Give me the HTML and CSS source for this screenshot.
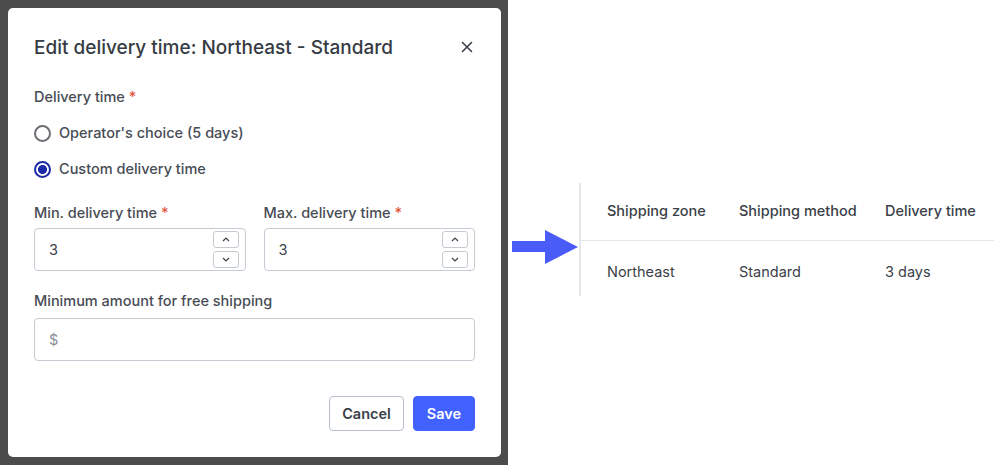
FILE: index.html
```html
<!DOCTYPE html>
<html>
<head>
<meta charset="utf-8">
<link rel="stylesheet" href="styles.css">
</head>
<body>
<div class="page">
  <div class="overlay">
    <div class="modal">
      <div class="modal-head">
        <h2 class="modal-title">Edit delivery time: Northeast - Standard</h2>
        <span class="close">
          <svg width="12" height="12" viewBox="0 0 12 12"><path d="M1.5 1.5 L10.5 10.5 M10.5 1.5 L1.5 10.5" stroke="#3b4049" stroke-width="1.6" stroke-linecap="round"/></svg>
        </span>
      </div>
      <div class="label">Delivery time <span class="req">*</span></div>
      <div class="radios">
        <label class="radio"><span class="dot"></span>Operator's choice (5 days)</label>
        <label class="radio checked"><span class="dot"></span>Custom delivery time</label>
      </div>
      <div class="two">
        <div class="field">
          <div class="label">Min. delivery time <span class="req">*</span></div>
          <div class="input">
            <span class="val">3</span>
            <span class="spin">
              <span class="sbtn"><svg width="8" height="5" viewBox="0 0 8 5"><path d="M1 4 L4 1 L7 4" fill="none" stroke="#3b4049" stroke-width="1.2"/></svg></span>
              <span class="sbtn"><svg width="8" height="5" viewBox="0 0 8 5"><path d="M1 1 L4 4 L7 1" fill="none" stroke="#3b4049" stroke-width="1.2"/></svg></span>
            </span>
          </div>
        </div>
        <div class="field">
          <div class="label">Max. delivery time <span class="req">*</span></div>
          <div class="input">
            <span class="val">3</span>
            <span class="spin">
              <span class="sbtn"><svg width="8" height="5" viewBox="0 0 8 5"><path d="M1 4 L4 1 L7 4" fill="none" stroke="#3b4049" stroke-width="1.2"/></svg></span>
              <span class="sbtn"><svg width="8" height="5" viewBox="0 0 8 5"><path d="M1 1 L4 4 L7 1" fill="none" stroke="#3b4049" stroke-width="1.2"/></svg></span>
            </span>
          </div>
        </div>
      </div>
      <div class="field wide">
        <div class="label">Minimum amount for free shipping</div>
        <div class="input"><span class="ph">$</span></div>
      </div>
      <div class="actions">
        <button class="btn cancel">Cancel</button>
        <button class="btn save">Save</button>
      </div>
    </div>
  </div>
  <div class="right">
    <svg class="arrow" width="66" height="34" viewBox="0 0 66 34"><path d="M0 11 H33 V0 L66 17 L33 34 V22 H0 Z" fill="#4a5cf7"/></svg>
    <div class="table">
      <div class="row head">
        <div class="c1">Shipping zone</div>
        <div class="c2">Shipping method</div>
        <div class="c3">Delivery time</div>
      </div>
      <div class="row">
        <div class="c1">Northeast</div>
        <div class="c2">Standard</div>
        <div class="c3">3 days</div>
      </div>
    </div>
  </div>
</div>
</body>
</html>
```
FILE: styles.css
```css
* { box-sizing: border-box; }
html, body { margin: 0; padding: 0; background: #fff; }
body { font-family: Inter, "Open Sans", "Liberation Sans", sans-serif; color: #3a3f48; width: 996px; height: 465px; overflow: hidden; }
.page { display: flex; height: 465px; }
.overlay { width: 508px; height: 465px; background: #4c4c4c; padding: 8px 7px 8px 8px; }
.modal { background: #fff; border-radius: 5px; height: 449px; padding: 26px 26px 0 26px; }
.modal-head { display: flex; justify-content: space-between; align-items: flex-start; height: 53px; }
.modal-title { margin: 0; font-size: 19px; font-weight: 500; color: #363b44; line-height: 28px; }
.close { margin-top: 7px; margin-right: 2px; display: flex; }
.label { font-size: 14.5px; font-weight: 500; color: #474c55; line-height: 20px; }
.req { color: #e0523a; }
.radios { display: flex; flex-direction: column; gap: 16px; margin-top: 16px; }
.radio { display: flex; align-items: center; gap: 8px; font-size: 14.5px; font-weight: 500; color: #474c55; line-height: 20px; }
.dot { width: 17px; height: 17px; border-radius: 50%; border: 2px solid #6b6e73; display: inline-block; }
.radio.checked .dot { border-color: #1d2ba8; background: radial-gradient(circle, #1d2ba8 0 4.2px, #fff 4.8px); }
.two { display: flex; gap: 18px; margin-top: 24px; }
.two .field { flex: 1; }
.field .label { margin-bottom: 5px; }
.wide .label { margin-bottom: 7px; }
.input { height: 43px; border: 1px solid #c6cbd3; border-radius: 4px; display: flex; align-items: center; justify-content: space-between; padding: 0 6px 0 14px; font-size: 14.5px; }
.val { color: #3a3f48; }
.ph { color: #8a8e95; }
.spin { display: flex; flex-direction: column; gap: 3px; }
.sbtn { width: 26px; height: 17px; border: 1px solid #c6cbd3; border-radius: 3px; display: flex; align-items: center; justify-content: center; background: #fff; }
.wide { margin-top: 20px; }
.actions { display: flex; justify-content: flex-end; gap: 9px; margin-top: 35px; }
.btn { font-family: inherit; font-size: 14.5px; font-weight: 600; height: 35px; border-radius: 4px; cursor: pointer; }
.cancel { width: 75px; background: #fff; border: 1px solid #b8bfca; color: #3a3f48; }
.save { width: 62px; background: #4262ff; border: 1px solid #4262ff; color: #fff; }
.right { flex: 1; display: flex; align-items: flex-start; padding-top: 183px; padding-left: 4px; }
.arrow { margin-top: 47px; }
.table { border-left: 2px solid #e6e8ec; margin-left: 1px; width: 415px; }
.row { display: flex; align-items: center; font-size: 14.5px; padding-left: 26px; color: #3a3f48; }
.row.head { height: 58px; font-weight: 500; border-bottom: 1px solid #e3e6ea; padding-bottom: 3px; }
.row:not(.head) { height: 55px; padding-top: 5px; }
.c1 { width: 132px; }
.c2 { width: 146px; }
.c3 { flex: 1; }
```
